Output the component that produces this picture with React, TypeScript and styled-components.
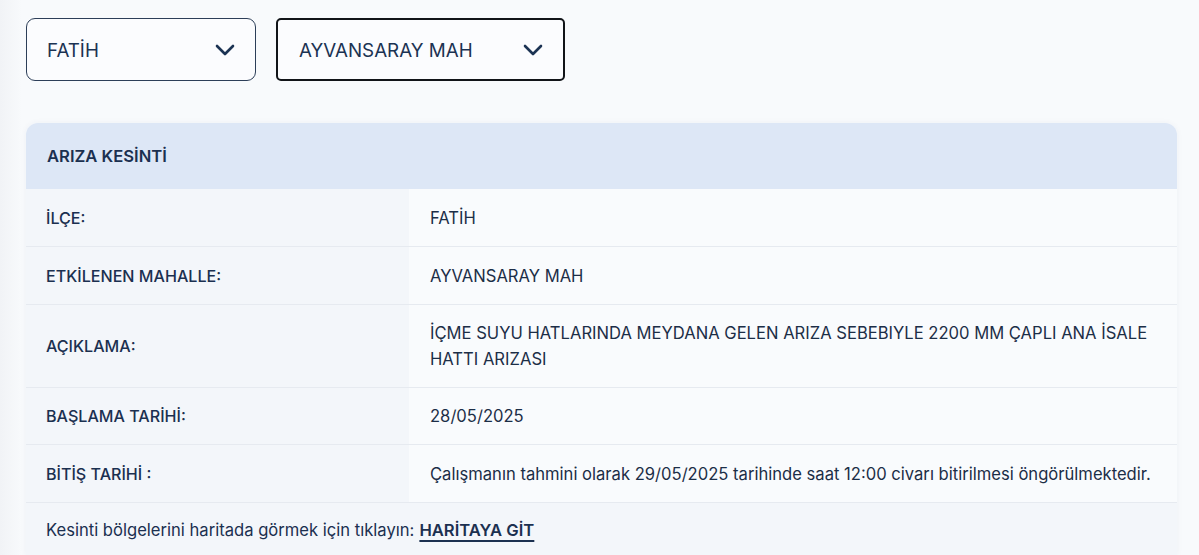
import React from 'react';
import styled, { createGlobalStyle } from 'styled-components';

const GlobalStyle = createGlobalStyle`
  html, body {
    margin: 0;
    padding: 0;
    background: #f8fafc;
  }
  body {
    font-family: Inter, "Noto Sans", sans-serif;
    color: #1b2f4d;
  }
`;

const Page = styled.div`
  min-height: 555px;
  box-sizing: border-box;
  padding: 18px 22px 0 26px;
  background: linear-gradient(90deg, #f1f3f6 0, #f8fafc 22px);
`;

const Filters = styled.div`
  display: flex;
  gap: 20px;
  margin-bottom: 42px;
`;

const Select = styled.div<{ $width: number; $active?: boolean }>`
  box-sizing: border-box;
  width: ${(p) => p.$width}px;
  height: 63px;
  display: flex;
  align-items: center;
  justify-content: space-between;
  padding: 1px 20px 0 ${(p) => (p.$active ? 21 : 20)}px;
  border: ${(p) => (p.$active ? '2px solid #111418' : '1px solid #2c3e58')};
  border-radius: ${(p) => (p.$active ? 5 : 9)}px;
  background: #fbfcfe;
  font-size: 18.8px;
  color: #1b3353;
`;

const Chevron = () => (
  <svg width="20" height="12" viewBox="0 0 20 12" fill="none">
    <path d="M2 2l8 8 8-8" stroke="#1b3353" strokeWidth="2.6" strokeLinecap="round" strokeLinejoin="round" />
  </svg>
);

const Card = styled.div`
  border-radius: 12px 12px 0 0;
  overflow: hidden;
  box-shadow: 0 0 6px rgba(30, 60, 110, 0.05);
`;

const CardHeader = styled.div`
  height: 66px;
  display: flex;
  align-items: center;
  padding-left: 21px;
  background: #dde7f6;
  font-size: 16.6px;
  font-weight: 600;
  color: #1b3050;
`;

const Row = styled.div<{ $height: number }>`
  display: grid;
  grid-template-columns: 383px 1fr;
  min-height: ${(p) => p.$height}px;
  border-bottom: 1px solid #e6eaf0;
`;

const Label = styled.div`
  display: flex;
  align-items: center;
  padding-left: 20px;
  background: #f3f6fa;
  font-size: 16.1px;
  font-weight: 500;
  color: #1b3050;
`;

const Value = styled.div`
  display: flex;
  align-items: center;
  padding: 0 24px 0 21px;
  background: #f9fbfd;
  font-size: 16.6px;
  line-height: 26px;
  color: #1c2e47;
`;

const Footer = styled.div`
  height: 53px;
  display: flex;
  align-items: center;
  padding-left: 20px;
  background: #f3f6fa;
  font-size: 16.6px;
  color: #1b3050;
`;

const MapLink = styled.a`
  margin-left: 5px;
  font-weight: 600;
  color: #1b3050;
  text-decoration: underline;
  text-decoration-thickness: 2px;
  text-underline-offset: 4px;
`;

const rows = [
  { label: 'İLÇE:', value: 'FATİH', height: 57 },
  { label: 'ETKİLENEN MAHALLE:', value: 'AYVANSARAY MAH', height: 57 },
  {
    label: 'AÇIKLAMA:',
    value: 'İÇME SUYU HATLARINDA MEYDANA GELEN ARIZA SEBEBIYLE 2200 MM ÇAPLI ANA İSALE HATTI ARIZASI',
    height: 82,
  },
  { label: 'BAŞLAMA TARİHİ:', value: '28/05/2025', height: 56 },
  {
    label: 'BİTİŞ TARİHİ :',
    value: 'Çalışmanın tahmini olarak 29/05/2025 tarihinde saat 12:00 civarı bitirilmesi öngörülmektedir.',
    height: 57,
  },
];

export default function App() {
  return (
    <>
      <GlobalStyle />
      <Page>
        <Filters>
          <Select $width={230}>
            FATİH
            <Chevron />
          </Select>
          <Select $width={289} $active>
            AYVANSARAY MAH
            <Chevron />
          </Select>
        </Filters>
        <Card>
          <CardHeader>ARIZA KESİNTİ</CardHeader>
          {rows.map((r) => (
            <Row key={r.label} $height={r.height}>
              <Label>{r.label}</Label>
              <Value>{r.value}</Value>
            </Row>
          ))}
          <Footer>
            Kesinti bölgelerini haritada görmek için tıklayın:
            <MapLink href="#">HARİTAYA GİT</MapLink>
          </Footer>
        </Card>
      </Page>
    </>
  );
}
